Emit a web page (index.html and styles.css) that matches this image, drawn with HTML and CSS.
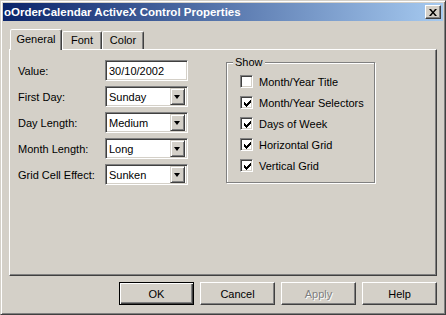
FILE: index.html
```html
<!DOCTYPE html>
<html lang="en">
<head>
  <meta charset="UTF-8">
  <title>oOrderCalendar ActiveX Control Properties</title>
  <link rel="stylesheet" href="styles.css">
</head>
<body>
  <div class="window">
    <div class="titlebar">
      <span class="title">oOrderCalendar ActiveX Control Properties</span>
      <div class="close">
        <svg width="8" height="7" viewBox="0 0 8 7">
          <path d="M0 0h2l2 2.5L6 0h2L5 3.5 8 7H6L4 4.5 2 7H0l3-3.5z" fill="#000"/>
        </svg>
      </div>
    </div>
    <div class="content">
      <div class="tabs">
        <div class="tab active">General</div>
        <div class="tab tab-font">Font</div>
        <div class="tab tab-color">Color</div>
      </div>
      <div class="panel">
        <div class="fields">
          <label>Value:</label>
          <div class="edit">30/10/2002</div>
          <label>First Day:</label>
          <div class="combo"><span>Sunday</span><i class="drop"></i></div>
          <label>Day Length:</label>
          <div class="combo"><span>Medium</span><i class="drop"></i></div>
          <label>Month Length:</label>
          <div class="combo"><span>Long</span><i class="drop"></i></div>
          <label>Grid Cell Effect:</label>
          <div class="combo"><span>Sunken</span><i class="drop"></i></div>
        </div>
        <fieldset class="group">
          <legend>Show</legend>
          <div class="checks">
            <div class="check"><i class="box"></i>Month/Year Title</div>
            <div class="check"><i class="box"><svg width="7" height="7" viewBox="0 0 7 7"><path d="M6 0h1v1h-1zM5 1h2v1h-2zM0 2h1v1h-1zM4 2h3v1h-3zM0 3h2v1h-2zM3 3h3v1h-3zM0 4h5v1h-5zM1 5h3v1h-3zM2 6h1v1h-1z" fill="#000"/></svg></i>Month/Year Selectors</div>
            <div class="check"><i class="box"><svg width="7" height="7" viewBox="0 0 7 7"><path d="M6 0h1v1h-1zM5 1h2v1h-2zM0 2h1v1h-1zM4 2h3v1h-3zM0 3h2v1h-2zM3 3h3v1h-3zM0 4h5v1h-5zM1 5h3v1h-3zM2 6h1v1h-1z" fill="#000"/></svg></i>Days of Week</div>
            <div class="check"><i class="box"><svg width="7" height="7" viewBox="0 0 7 7"><path d="M6 0h1v1h-1zM5 1h2v1h-2zM0 2h1v1h-1zM4 2h3v1h-3zM0 3h2v1h-2zM3 3h3v1h-3zM0 4h5v1h-5zM1 5h3v1h-3zM2 6h1v1h-1z" fill="#000"/></svg></i>Horizontal Grid</div>
            <div class="check"><i class="box"><svg width="7" height="7" viewBox="0 0 7 7"><path d="M6 0h1v1h-1zM5 1h2v1h-2zM0 2h1v1h-1zM4 2h3v1h-3zM0 3h2v1h-2zM3 3h3v1h-3zM0 4h5v1h-5zM1 5h3v1h-3zM2 6h1v1h-1z" fill="#000"/></svg></i>Vertical Grid</div>
          </div>
        </fieldset>
      </div>
      <div class="buttons">
        <div class="btn default">OK</div>
        <div class="btn">Cancel</div>
        <div class="btn disabled">Apply</div>
        <div class="btn">Help</div>
      </div>
    </div>
  </div>
</body>
</html>
```

FILE: styles.css
```css
:root {
  --face: #d4d0c8;
  --shadow: #808080;
  --dark: #404040;
  --light: #ffffff;
}
* {
  box-sizing: border-box;
  margin: 0;
  padding: 0;
}
body {
  background: var(--face);
  font-family: "Liberation Sans", Arial, sans-serif;
  font-size: 11px;
  color: #000;
}
.window {
  width: 446px;
  height: 315px;
  padding: 2px;
  border: 1px solid;
  border-color: var(--face) var(--dark) var(--dark) var(--face);
  box-shadow: inset 1px 1px var(--light), inset -1px -1px var(--shadow);
  background: var(--face);
}
.titlebar {
  height: 18px;
  display: flex;
  align-items: center;
  justify-content: space-between;
  padding: 0 2px 0 1px;
  background: linear-gradient(to right, #0a246a, #a6caf0);
}
.title {
  color: #fff;
  font-weight: bold;
  font-size: 11.5px;
}
.close {
  width: 16px;
  height: 14px;
  display: flex;
  align-items: center;
  justify-content: center;
  background: var(--face);
  border: 1px solid;
  border-color: var(--light) var(--dark) var(--dark) var(--light);
  box-shadow: inset -1px -1px var(--shadow);
}
.content {
  padding: 0 6px;
}
.tabs {
  display: flex;
  align-items: flex-end;
  height: 28px;
  padding-left: 1px;
}
.tab {
  height: 18px;
  padding-top: 2px;
  text-align: center;
  background: var(--face);
  border: 1px solid;
  border-bottom: none;
  border-color: var(--light) var(--dark) transparent var(--light);
  border-radius: 2px 2px 0 0;
  box-shadow: inset -1px 0 var(--shadow);
}
.tab.active {
  width: 52px;
  height: 21px;
  padding-top: 3px;
  margin-bottom: -1px;
  position: relative;
  z-index: 1;
}
.tab-font {
  width: 40px;
}
.tab-color {
  width: 42px;
}
.panel {
  height: 227px;
  display: flex;
  align-items: flex-start;
  padding: 6px 0 0 8px;
  border: 1px solid;
  border-color: var(--light) var(--dark) var(--dark) var(--light);
  box-shadow: inset -1px -1px var(--shadow);
}
.fields {
  margin-top: 4px;
  display: grid;
  grid-template-columns: 87px 83px;
  grid-auto-rows: 21px;
  row-gap: 5px;
  align-items: center;
}
.edit,
.combo {
  height: 21px;
  background: #fff;
  border: 1px solid;
  border-color: var(--shadow) var(--light) var(--light) var(--shadow);
  box-shadow: inset 1px 1px var(--dark), inset -1px -1px var(--face);
  padding: 0 3px;
  display: flex;
  align-items: center;
  justify-content: space-between;
}
.combo {
  padding-right: 2px;
}
.drop {
  width: 15px;
  height: 17px;
  background: var(--face);
  border: 1px solid;
  border-color: var(--face) var(--dark) var(--dark) var(--face);
  box-shadow: inset 1px 1px var(--light), inset -1px -1px var(--shadow);
  position: relative;
}
.drop::after {
  content: "";
  position: absolute;
  left: 3px;
  top: 6px;
  border-left: 3.5px solid transparent;
  border-right: 3.5px solid transparent;
  border-top: 4px solid #000;
}
.group {
  width: 149px;
  height: 127px;
  margin-left: 38px;
  border: 1px solid var(--shadow);
  box-shadow: inset 1px 1px var(--light), 1px 1px var(--light);
}
.group legend {
  margin-left: 6px;
  padding: 0 2px;
  line-height: 13px;
  background: var(--face);
}
.checks {
  padding: 2px 0 0 13px;
}
.check {
  height: 21px;
  display: flex;
  align-items: center;
  gap: 6px;
}
.box {
  width: 13px;
  height: 13px;
  display: flex;
  align-items: center;
  justify-content: center;
  background: #fff;
  border: 1px solid;
  border-color: var(--shadow) var(--light) var(--light) var(--shadow);
  box-shadow: inset 1px 1px var(--dark), inset -1px -1px var(--face);
}
.box svg {
  margin: 1px 0 0 1px;
}
.buttons {
  margin-top: 6px;
  display: flex;
  justify-content: flex-end;
  gap: 6px;
}
.btn {
  width: 75px;
  height: 23px;
  display: flex;
  align-items: center;
  justify-content: center;
  border: 1px solid;
  border-color: var(--light) var(--dark) var(--dark) var(--light);
  box-shadow: inset -1px -1px var(--shadow);
}
.btn.default {
  border: 1px solid #000;
  box-shadow: inset 1px 1px var(--light), inset -1px -1px var(--dark), inset -2px -2px var(--shadow);
}
.btn.disabled {
  color: var(--shadow);
  text-shadow: 1px 1px var(--light);
}
```
